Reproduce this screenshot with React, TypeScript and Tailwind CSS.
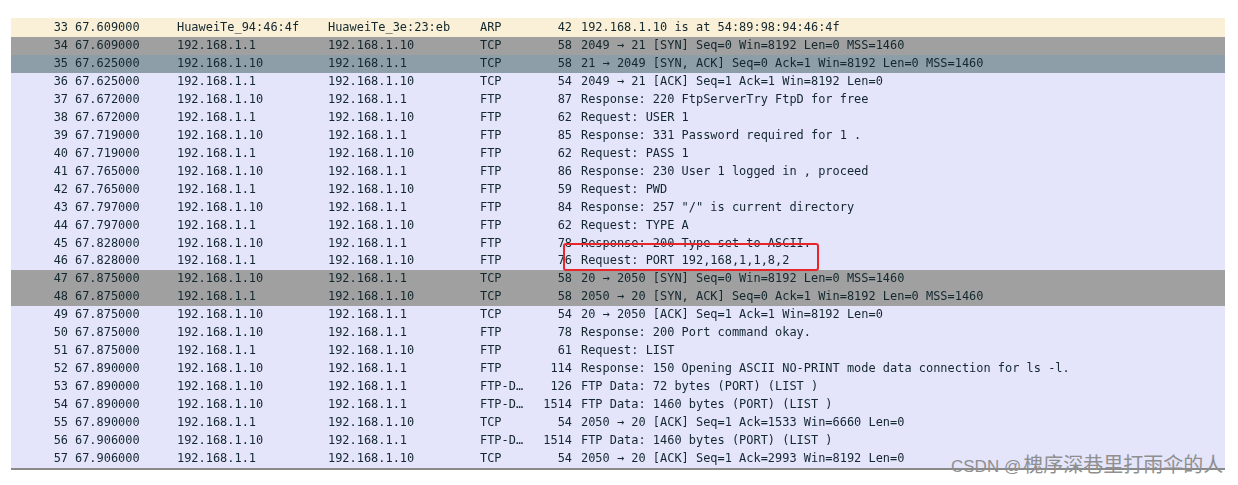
const T = 'bg-[#e4e4fb]';
const G = 'bg-[#a0a0a0]';
const rows: [string, string, string, string, string, string, string, string][] = [
  ['33', '67.609000', 'HuaweiTe_94:46:4f', 'HuaweiTe_3e:23:eb', 'ARP', '42', '192.168.1.10 is at 54:89:98:94:46:4f', 'bg-[#faf0d7] h-[19px]'],
  ['34', '67.609000', '192.168.1.1', '192.168.1.10', 'TCP', '58', '2049 → 21 [SYN] Seq=0 Win=8192 Len=0 MSS=1460', G],
  ['35', '67.625000', '192.168.1.10', '192.168.1.1', 'TCP', '58', '21 → 2049 [SYN, ACK] Seq=0 Ack=1 Win=8192 Len=0 MSS=1460', 'bg-[#8d9ea9]'],
  ['36', '67.625000', '192.168.1.1', '192.168.1.10', 'TCP', '54', '2049 → 21 [ACK] Seq=1 Ack=1 Win=8192 Len=0', T],
  ['37', '67.672000', '192.168.1.10', '192.168.1.1', 'FTP', '87', 'Response: 220 FtpServerTry FtpD for free', T],
  ['38', '67.672000', '192.168.1.1', '192.168.1.10', 'FTP', '62', 'Request: USER 1', T],
  ['39', '67.719000', '192.168.1.10', '192.168.1.1', 'FTP', '85', 'Response: 331 Password required for 1 .', T],
  ['40', '67.719000', '192.168.1.1', '192.168.1.10', 'FTP', '62', 'Request: PASS 1', T],
  ['41', '67.765000', '192.168.1.10', '192.168.1.1', 'FTP', '86', 'Response: 230 User 1 logged in , proceed', T],
  ['42', '67.765000', '192.168.1.1', '192.168.1.10', 'FTP', '59', 'Request: PWD', T],
  ['43', '67.797000', '192.168.1.10', '192.168.1.1', 'FTP', '84', 'Response: 257 "/" is current directory', T],
  ['44', '67.797000', '192.168.1.1', '192.168.1.10', 'FTP', '62', 'Request: TYPE A', T],
  ['45', '67.828000', '192.168.1.10', '192.168.1.1', 'FTP', '78', 'Response: 200 Type set to ASCII.', T],
  ['46', '67.828000', '192.168.1.1', '192.168.1.10', 'FTP', '76', 'Request: PORT 192,168,1,1,8,2', T],
  ['47', '67.875000', '192.168.1.10', '192.168.1.1', 'TCP', '58', '20 → 2050 [SYN] Seq=0 Win=8192 Len=0 MSS=1460', G],
  ['48', '67.875000', '192.168.1.1', '192.168.1.10', 'TCP', '58', '2050 → 20 [SYN, ACK] Seq=0 Ack=1 Win=8192 Len=0 MSS=1460', G],
  ['49', '67.875000', '192.168.1.10', '192.168.1.1', 'TCP', '54', '20 → 2050 [ACK] Seq=1 Ack=1 Win=8192 Len=0', T],
  ['50', '67.875000', '192.168.1.10', '192.168.1.1', 'FTP', '78', 'Response: 200 Port command okay.', T],
  ['51', '67.875000', '192.168.1.1', '192.168.1.10', 'FTP', '61', 'Request: LIST', T],
  ['52', '67.890000', '192.168.1.10', '192.168.1.1', 'FTP', '114', 'Response: 150 Opening ASCII NO-PRINT mode data connection for ls -l.', T],
  ['53', '67.890000', '192.168.1.10', '192.168.1.1', 'FTP-D…', '126', 'FTP Data: 72 bytes (PORT) (LIST )', T],
  ['54', '67.890000', '192.168.1.10', '192.168.1.1', 'FTP-D…', '1514', 'FTP Data: 1460 bytes (PORT) (LIST )', T],
  ['55', '67.890000', '192.168.1.1', '192.168.1.10', 'TCP', '54', '2050 → 20 [ACK] Seq=1 Ack=1533 Win=6660 Len=0', T],
  ['56', '67.906000', '192.168.1.10', '192.168.1.1', 'FTP-D…', '1514', 'FTP Data: 1460 bytes (PORT) (LIST )', T],
  ['57', '67.906000', '192.168.1.1', '192.168.1.10', 'TCP', '54', '2050 → 20 [ACK] Seq=1 Ack=2993 Win=8192 Len=0', T],
];

export default function App() {
  return (
    <div className="w-[1238px] h-[485px] bg-white pt-[18px] pl-[11px] overflow-hidden relative font-['DejaVu_Sans_Mono','Liberation_Mono',monospace] text-[11.95px] text-[#12272e]">
      <div className="w-[1214px] border-b-[2px] border-[#8a8a8a] blur-[0.3px]">
        {rows.map((r) => (
          <div key={r[0]} className={`flex h-[17.96px] items-center whitespace-pre ${r[7]}`}>
            <span className="w-[57px] text-right">{r[0]}</span>
            <span className="w-[109px] pl-[7px]">{r[1]}</span>
            <span className="w-[151px]">{r[2]}</span>
            <span className="w-[152px]">{r[3]}</span>
            <span className="w-[49px]">{r[4]}</span>
            <span className="w-[43px] text-right">{r[5]}</span>
            <span className="pl-[9px]">{r[6]}</span>
          </div>
        ))}
      </div>
      <div className="absolute left-[563px] top-[243px] w-[256px] h-[28px] border-[2px] border-[#e8262a] rounded-[3px]" />
      <div className="absolute left-[951px] top-[453px] leading-[24px] whitespace-nowrap text-[#8f8f8f] font-['Liberation_Sans','Noto_Sans_CJK_SC',sans-serif]">
        <span className="text-[17px]">CSDN @</span>
        <span className="text-[20px] ml-[2px]">槐序深巷里打雨伞的人</span>
      </div>
    </div>
  );
}
